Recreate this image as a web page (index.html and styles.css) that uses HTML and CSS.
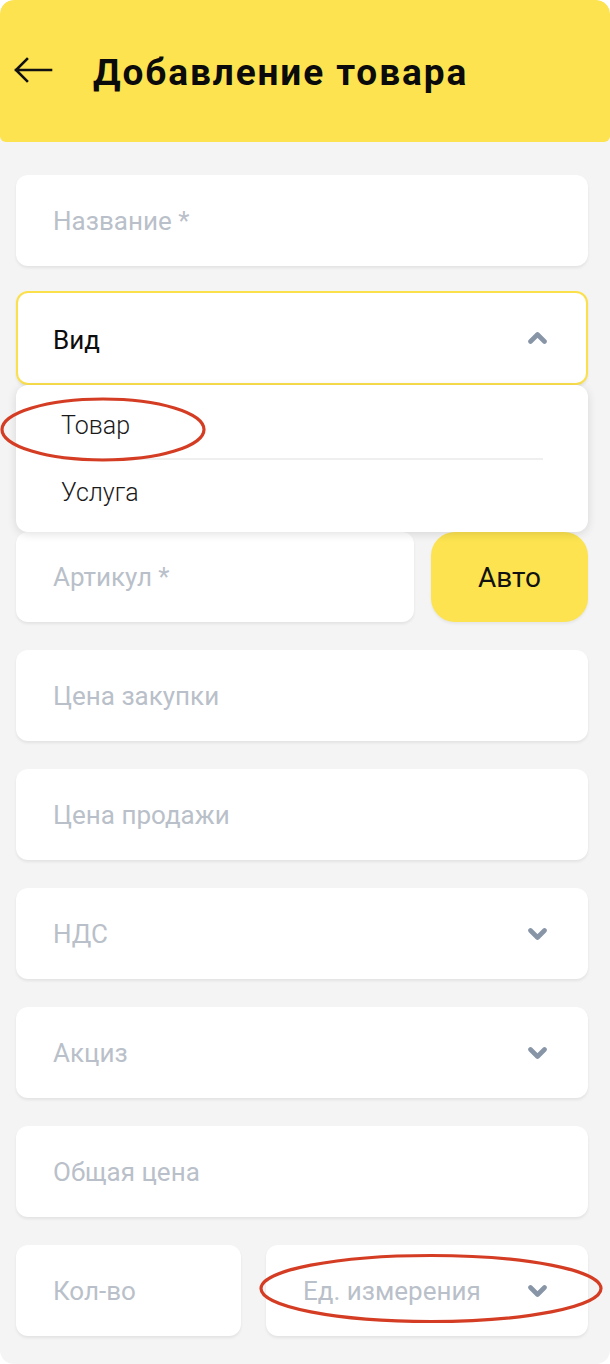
FILE: index.html
```html
<!DOCTYPE html>
<html lang="ru">
<head>
<meta charset="utf-8">
<title>Добавление товара</title>
<link rel="stylesheet" href="styles.css">
</head>
<body>
<div class="screen">
  <header class="header">
    <svg class="back" width="40" height="28" viewBox="0 0 40 28" aria-hidden="true">
      <path d="M38 14 H3 M14 3 L3 14 L14 25" fill="none" stroke="#111" stroke-width="2.6" stroke-linecap="square" stroke-linejoin="miter"/>
    </svg>
    <h1 class="title">Добавление товара</h1>
  </header>

  <main class="form">
    <div class="field"><span class="ph">Название *</span></div>

    <div class="select-group">
      <div class="field field-active">
        <span class="value">Вид</span>
        <svg class="chev" width="19" height="12" viewBox="0 0 19 12" aria-hidden="true"><polyline points="2.5,9.5 9.5,2.5 16.5,9.5" fill="none" stroke="#8795a7" stroke-width="4.6" stroke-linecap="round" stroke-linejoin="round"/></svg>
      </div>
      <div class="dropdown">
        <div class="option">Товар</div>
        <div class="divider"></div>
        <div class="option">Услуга</div>
      </div>
      <div class="row">
        <div class="field field-grow"><span class="ph">Артикул *</span></div>
        <button class="auto">Авто</button>
      </div>
    </div>

    <div class="field"><span class="ph">Цена закупки</span></div>
    <div class="field"><span class="ph">Цена продажи</span></div>
    <div class="field">
      <span class="ph">НДС</span>
      <svg class="chev" width="19" height="12" viewBox="0 0 19 12" aria-hidden="true"><polyline points="2.5,2.5 9.5,9.5 16.5,2.5" fill="none" stroke="#8795a7" stroke-width="4.6" stroke-linecap="round" stroke-linejoin="round"/></svg>
    </div>
    <div class="field">
      <span class="ph">Акциз</span>
      <svg class="chev" width="19" height="12" viewBox="0 0 19 12" aria-hidden="true"><polyline points="2.5,2.5 9.5,9.5 16.5,2.5" fill="none" stroke="#8795a7" stroke-width="4.6" stroke-linecap="round" stroke-linejoin="round"/></svg>
    </div>
    <div class="field"><span class="ph">Общая цена</span></div>
    <div class="row row-bottom">
      <div class="field field-qty"><span class="ph">Кол-во</span></div>
      <div class="field field-grow">
        <span class="ph">Ед. измерения</span>
        <svg class="chev" width="19" height="12" viewBox="0 0 19 12" aria-hidden="true"><polyline points="2.5,2.5 9.5,9.5 16.5,2.5" fill="none" stroke="#8795a7" stroke-width="4.6" stroke-linecap="round" stroke-linejoin="round"/></svg>
      </div>
    </div>
  </main>

  <svg class="marks" width="610" height="1364" viewBox="0 0 610 1364" aria-hidden="true">
    <ellipse cx="103" cy="429.5" rx="101" ry="30.5" fill="none" stroke="#d43d24" stroke-width="3.2"/>
    <ellipse cx="431" cy="1288.5" rx="170" ry="33" fill="none" stroke="#d43d24" stroke-width="3.2"/>
  </svg>
</div>
</body>
</html>
```

FILE: styles.css
```css
* { box-sizing: border-box; }

html, body {
  margin: 0;
  padding: 0;
  background: #ffffff;
}

body {
  font-family: Roboto, "Noto Sans", "Liberation Sans", sans-serif;
}

.screen {
  position: relative;
  width: 610px;
  height: 1364px;
  background: #f4f4f4;
  border-radius: 14px;
  overflow: hidden;
}

.header {
  height: 142px;
  background: #fce34f;
  border-radius: 14px 14px 6px 6px;
  display: flex;
  align-items: center;
  padding-left: 13px;
  gap: 40px;
}

.back {
  flex: none;
  margin-top: -2px;
}

.title {
  margin: 0;
  font-size: 37px;
  font-weight: 700;
  color: #0b0b0b;
  letter-spacing: 1.9px;
  margin-top: 2px;
}

.form {
  display: flex;
  flex-direction: column;
  gap: 28px;
  padding: 33px 22px 0 16px;
}

.field {
  height: 91px;
  background: #ffffff;
  border-radius: 12px;
  box-shadow: 0 2px 3px rgba(0, 0, 0, 0.07);
  display: flex;
  align-items: center;
  justify-content: space-between;
  padding: 0 41px 0 37px;
  font-size: 26px;
}

.ph {
  color: #b9c0c9;
}

.value {
  color: #0d0d0d;
}

.chev {
  flex: none;
}

.select-group {
  display: flex;
  flex-direction: column;
  margin-top: -3px;
}

.field-active {
  height: 94px;
  border: 2px solid #fbe04c;
  padding: 3px 39px 0 35px;
  position: relative;
  z-index: 1;
}

.field-active .chev {
  margin-top: -3px;
}

.dropdown {
  position: relative;
  z-index: 2;
  background: #ffffff;
  border-radius: 12px;
  box-shadow: 0 2px 10px rgba(0, 0, 0, 0.12);
  padding: 8px 0;
  height: 147px;
}

.option {
  height: 65px;
  display: flex;
  align-items: center;
  padding-left: 45px;
  font-size: 25px;
  font-weight: 300;
  color: #1a1a1a;
}

.option + .divider + .option {
  height: 64px;
}

.divider {
  height: 2px;
  background: #efefef;
  margin: 0 45px;
}

.row {
  display: flex;
  gap: 17px;
}

.row .field {
  height: 90px;
}

.field-grow {
  flex: 1;
}

.auto {
  width: 157px;
  height: 90px;
  border: none;
  border-radius: 24px;
  background: #fce34f;
  font-family: inherit;
  font-size: 28px;
  font-weight: 400;
  color: #111111;
  box-shadow: 0 2px 3px rgba(0, 0, 0, 0.06);
  padding: 0;
}

.row-bottom {
  gap: 25px;
}

.row-bottom .field {
  height: 91px;
}

.field-qty {
  width: 225px;
  flex: none;
}

.marks {
  position: absolute;
  left: 0;
  top: 0;
  z-index: 10;
  pointer-events: none;
}
```
